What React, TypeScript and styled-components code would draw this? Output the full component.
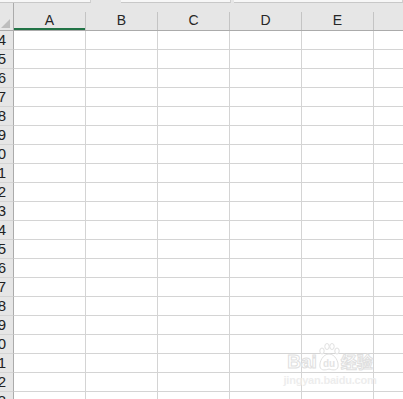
import React from 'react';
import styled, {createGlobalStyle} from 'styled-components';

const GlobalStyle = createGlobalStyle`
  html, body {
    margin: 0;
    padding: 0;
    background: #ffffff;
    overflow: hidden;
  }
  body {
    font-family: "Liberation Sans", Arial, sans-serif;
  }
`;

const Sheet = styled.div`
  position: relative;
  width: 403px;
  height: 399px;
  overflow: hidden;
  background: #ffffff;
`;

const TabStrip = styled.div`
  display: flex;
  height: 3px;
  background: #e6e6e6;
`;

const Tab = styled.div<{ $w: number; $ml?: number }>`
  width: ${p => p.$w}px;
  margin-left: ${p => p.$ml || 0}px;
  height: 2px;
  background: #f7f7f7;
  border-bottom: 1px solid #c8c8c8;
  border-right: 1px solid #d0d0d0;
`;

const Grid = styled.div`
  display: grid;
  grid-template-columns: 14px repeat(6, 72px);
  grid-template-rows: 28px;
  grid-auto-rows: 19px;
`;

const Corner = styled.div`
  background: #e6e6e6;
  border-right: 1px solid #ababab;
  border-bottom: 1px solid #ababab;
  display: flex;
  align-items: flex-end;
  padding: 0 0 2px 1px;
  box-sizing: border-box;
`;

const ColHead = styled.div<{ $active?: boolean }>`
  background: #e6e6e6;
  border-bottom: 1px solid #ababab;
  box-shadow: ${p => (p.$active ? 'inset 0 -2px 0 #217346' : 'none')};
  display: flex;
  align-items: flex-end;
  box-sizing: border-box;
`;

const ColLabel = styled.div`
  width: 100%;
  height: 18px;
  border-right: 1px solid #c4c4c4;
  text-align: center;
  font-size: 14px;
  line-height: 17px;
  color: #262626;
  box-sizing: border-box;
`;

const RowHead = styled.div`
  background: #e6e6e6;
  border-right: 1px solid #ababab;
  border-bottom: 1px solid #d4d4d4;
  box-sizing: border-box;
  overflow: hidden;
  display: flex;
  justify-content: flex-end;
  align-items: center;
`;

const RowNum = styled.span`
  flex: none;
  padding-right: 7px;
  font-size: 15px;
  line-height: 18px;
  color: #222222;
  white-space: nowrap;
`;

const Cell = styled.div`
  background: #ffffff;
  border-right: 1px solid #d4d4d4;
  border-bottom: 1px solid #d4d4d4;
  box-sizing: border-box;
`;

const Watermark = styled.div`
  position: absolute;
  left: 285px;
  top: 343px;
  width: 90px;
  display: flex;
  flex-direction: column;
  align-items: center;
  pointer-events: none;
`;

const MarkLine = styled.div`
  display: flex;
  align-items: flex-end;
  gap: 1px;
`;

const MarkWord = styled.span<{ $size: number }>`
  font-family: "Liberation Sans", "Noto Sans CJK SC", sans-serif;
  font-weight: bold;
  font-size: ${p => p.$size}px;
  line-height: 1;
  color: #ffffff;
  -webkit-text-stroke: 1px #e0e0e0;
`;

const MarkUrl = styled.span`
  font-family: "Liberation Sans", sans-serif;
  font-weight: bold;
  font-size: 11px;
  margin-top: 3px;
  color: #ededed;
  letter-spacing: -0.2px;
`;

const cols = ['A', 'B', 'C', 'D', 'E', 'F'];
const rows = Array.from({length: 20}, (_, i) => i + 14);

function Paw() {
  return (
    <svg width="22" height="28" viewBox="0 0 22 28">
      <g fill="#fff" stroke="#e0e0e0" strokeWidth="1">
        <ellipse cx="4" cy="8" rx="2.2" ry="3"/>
        <ellipse cx="9" cy="3.5" rx="2.2" ry="3"/>
        <ellipse cx="14" cy="3.5" rx="2.2" ry="3"/>
        <ellipse cx="19" cy="8" rx="2.2" ry="3"/>
        <path d="M11 11 C5 11 1 19 2 24 C3 28 8 27 11 26 C14 27 19 28 20 24 C21 19 17 11 11 11 Z"/>
      </g>
      <text x="11" y="24" textAnchor="middle" fontSize="10" fontWeight="bold"
            fontFamily="Liberation Sans, sans-serif" fill="#e4e4e4">du</text>
    </svg>
  );
}

export default function App() {
  return (
    <Sheet>
      <GlobalStyle/>
      <TabStrip>
        <Tab $w={91}/>
        <Tab $w={110} $ml={30}/>
        <Tab $w={170} $ml={3}/>
      </TabStrip>
      <Grid>
        <Corner>
          <svg width="9" height="9" viewBox="0 0 9 9">
            <polygon points="9,0 9,9 0,9" fill="#bdbdbd"/>
          </svg>
        </Corner>
        {cols.map(c => (
          <ColHead key={c} $active={c === 'A'}>
            <ColLabel>{c === 'F' ? '' : c}</ColLabel>
          </ColHead>
        ))}
        {rows.map(r => (
          <React.Fragment key={r}>
            <RowHead><RowNum>{r}</RowNum></RowHead>
            {cols.map(c => <Cell key={c}/>)}
          </React.Fragment>
        ))}
      </Grid>
      <Watermark>
        <MarkLine>
          <MarkWord $size={19}>Bai</MarkWord>
          <Paw/>
          <MarkWord $size={16}>经验</MarkWord>
        </MarkLine>
        <MarkUrl>jingyan.baidu.com</MarkUrl>
      </Watermark>
    </Sheet>
  );
}
